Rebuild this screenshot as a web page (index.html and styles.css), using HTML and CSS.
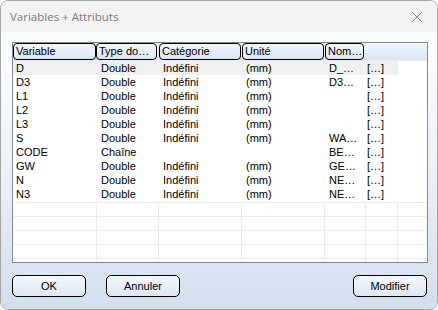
FILE: index.html
```html
<!DOCTYPE html>
<html>
<head>
<meta charset="utf-8">
<link rel="stylesheet" href="styles.css">
</head>
<body>
<div class="window">
  <div class="titlebar">
    <span class="title">Variables + Attributs</span>
    <svg class="close" width="12" height="12" viewBox="0 0 12 12"><path d="M1 1L11 11M11 1L1 11" stroke="#8a8a8a" stroke-width="1" fill="none"/></svg>
  </div>
  <div class="body">
    <div class="table">
      <div class="header">
        <div class="hcell h1">Variable</div>
        <div class="hcell h2">Type do…</div>
        <div class="hcell h3">Catégorie</div>
        <div class="hcell h4">Unité</div>
        <div class="hcell h5">Nom…</div>
      </div>
      <div class="rows">
        <div class="row sel"><span class="c1">D</span><span>Double</span><span>Indéfini</span><span>(mm)</span><span>D_…</span><span class="c6">[…]</span></div>
        <div class="row"><span class="c1">D3</span><span>Double</span><span>Indéfini</span><span>(mm)</span><span>D3…</span><span class="c6">[…]</span></div>
        <div class="row"><span class="c1">L1</span><span>Double</span><span>Indéfini</span><span>(mm)</span><span></span><span class="c6">[…]</span></div>
        <div class="row"><span class="c1">L2</span><span>Double</span><span>Indéfini</span><span>(mm)</span><span></span><span class="c6">[…]</span></div>
        <div class="row"><span class="c1">L3</span><span>Double</span><span>Indéfini</span><span>(mm)</span><span></span><span class="c6">[…]</span></div>
        <div class="row"><span class="c1">S</span><span>Double</span><span>Indéfini</span><span>(mm)</span><span>WA…</span><span class="c6">[…]</span></div>
        <div class="row"><span class="c1">CODE</span><span>Chaîne</span><span></span><span></span><span>BE…</span><span class="c6">[…]</span></div>
        <div class="row"><span class="c1">GW</span><span>Double</span><span>Indéfini</span><span>(mm)</span><span>GE…</span><span class="c6">[…]</span></div>
        <div class="row"><span class="c1">N</span><span>Double</span><span>Indéfini</span><span>(mm)</span><span>NE…</span><span class="c6">[…]</span></div>
        <div class="row"><span class="c1">N3</span><span>Double</span><span>Indéfini</span><span>(mm)</span><span>NE…</span><span class="c6">[…]</span></div>
        <div class="empty">
          <div class="erow"><span></span><span></span><span></span><span></span><span></span><span></span><span class="f"></span></div>
          <div class="erow"><span></span><span></span><span></span><span></span><span></span><span></span><span class="f"></span></div>
          <div class="erow"><span></span><span></span><span></span><span></span><span></span><span></span><span class="f"></span></div>
          <div class="erow"><span></span><span></span><span></span><span></span><span></span><span></span><span class="f"></span></div>
          <div class="erow"><span></span><span></span><span></span><span></span><span></span><span></span><span class="f"></span></div>
        </div>
      </div>
    </div>
    <div class="buttons">
      <button class="btn">OK</button>
      <button class="btn">Annuler</button>
      <span class="spacer"></span>
      <button class="btn">Modifier</button>
    </div>
  </div>
</div>
</body>
</html>
```

FILE: styles.css
```css
html, body {
  margin: 0;
  padding: 0;
  background: #ffffff;
}
.window {
  width: 438px;
  height: 310px;
  box-sizing: border-box;
  border: 1px solid #a6a6a6;
  border-radius: 8px;
  overflow: hidden;
  display: flex;
  flex-direction: column;
  font-family: "Liberation Sans", Arial, sans-serif;
  font-size: 11px;
  color: #000;
}
.titlebar {
  height: 31px;
  flex: none;
  background: #f3f3f3;
  display: flex;
  align-items: center;
  justify-content: space-between;
  padding: 0 14px 0 9px;
}
.title {
  font-family: "Open Sans", sans-serif;
  font-size: 11.5px;
  color: #7a7a7a;
}
.close {
  display: block;
}
.body {
  flex: 1;
  background: linear-gradient(#fcfdfe 0%, #eef3f9 45%, #d2deee 100%);
  padding: 10px 9px 12px 11px;
  display: flex;
  flex-direction: column;
}
.table {
  height: 221px;
  box-sizing: border-box;
  border: 1px solid #828790;
  background: #fff;
  display: flex;
  flex-direction: column;
  overflow: hidden;
}
.header {
  height: 17px;
  flex: none;
  display: flex;
  align-items: stretch;
  background: linear-gradient(#f3f7fc, #dae5f3);
  border-bottom: 1px solid #e9eef5;
}
.hcell {
  box-sizing: border-box;
  border: 1px solid #000;
  border-radius: 4px;
  background: linear-gradient(#f3f7fc, #dbe6f4);
  padding-left: 2px;
  line-height: 15px;
  white-space: nowrap;
  overflow: hidden;
}
.h1 { width: 83px; }
.h2 { width: 61px; }
.h3 { width: 82px; margin-left: 2px; }
.h4 { width: 82px; margin-left: 1px; }
.h5 { width: 39px; margin-left: 1px; }
.rows {
  display: flex;
  flex-direction: column;
}
.row, .erow {
  display: grid;
  grid-template-columns: 84px 62px 83px 83px 41px 32px 1fr;
  height: 14px;
  line-height: 14px;
}
.row span {
  padding-left: 4px;
  white-space: nowrap;
  overflow: hidden;
}
.row .c1 { padding-left: 3px; }
.row .c6 { padding-left: 1px; }
.row.sel {
  grid-template-columns: 84px 62px 83px 83px 41px 32px;
  background: #f0f0f0;
  width: 385px;
}
.empty {
  margin-top: 1px;
}
.erow {
  box-sizing: border-box;
  border-top: 1px solid #ececec;
}
.erow span {
  border-right: 1px solid #ececec;
}
.erow span.f {
  border-right: none;
}
.buttons {
  margin-top: 12px;
  display: flex;
  align-items: center;
}
.btn {
  width: 74px;
  height: 22px;
  box-sizing: border-box;
  border: 1px solid #000;
  border-radius: 5px;
  background: linear-gradient(#f4f8fd, #dce7f4);
  font-family: "Liberation Sans", Arial, sans-serif;
  font-size: 11px;
  color: #000;
  padding: 0;
  margin: 0 20px 0 0;
}
.spacer { flex: 1; }
.btn:last-child { margin: 0 1px 0 0; }
```
